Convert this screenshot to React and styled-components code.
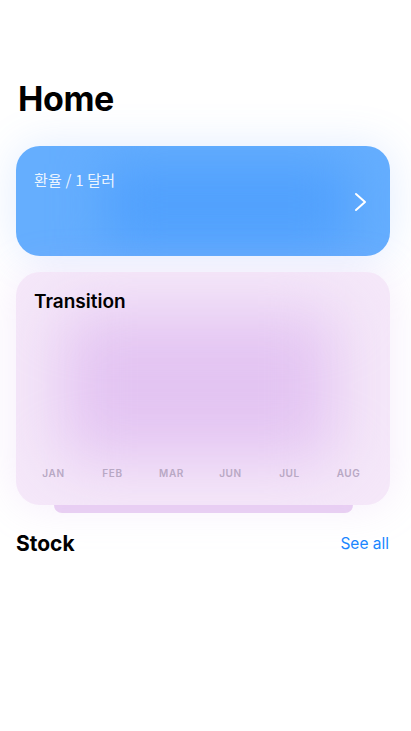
import React from "react";
import styled, { createGlobalStyle } from "styled-components";

const Global = createGlobalStyle`
  html, body { margin: 0; padding: 0; background: #ffffff; }
  body { font-family: Inter, "Noto Sans", "Noto Sans CJK KR", sans-serif; -webkit-font-smoothing: antialiased; }
`;

const Page = styled.div`
  display: flex;
  flex-direction: column;
  padding: 77px 21px 0 16px;
  width: 411px;
  box-sizing: border-box;
`;

const Title = styled.h1`
  margin: 0 0 25px 2px;
  font-size: 34px;
  line-height: 44px;
  font-weight: 700;
  color: #000;
  letter-spacing: -0.4px;
`;

const Card = styled.div`
  position: relative;
  overflow: hidden;
  border-radius: 24px;
  height: ${(p) => p.$h}px;
  background: ${(p) => p.$edge};
  box-shadow: 0 0 44px ${(p) => p.$glow};
  isolation: isolate;
  &::before {
    content: "";
    position: absolute;
    inset: ${(p) => p.$inset};
    background: ${(p) => p.$core};
    filter: blur(${(p) => p.$blur}px);
    z-index: -1;
  }
`;

const RateCard = styled(Card)`
  display: flex;
  align-items: flex-start;
  justify-content: space-between;
  padding: 24px 22px 0 18px;
  box-sizing: border-box;
  margin-bottom: 16px;
`;

const RateLabel = styled.span`
  font-family: "Noto Sans CJK KR", "Noto Sans", sans-serif;
  font-size: 15px;
  line-height: 20px;
  letter-spacing: 0.2px;
  color: rgba(255, 255, 255, 0.9);
`;

const Chevron = styled.svg`
  margin-top: 22px;
  width: 14px;
  height: 20px;
`;

const ChartCard = styled(Card)`
  display: flex;
  flex-direction: column;
  padding: 18px 12px 26px 8px;
  box-sizing: border-box;
`;

const CardTitle = styled.h2`
  margin: 0 0 0 10px;
  font-size: 19px;
  line-height: 24px;
  font-weight: 600;
  color: #000;
`;

const Months = styled.div`
  margin-top: auto;
  display: grid;
  grid-template-columns: repeat(6, 1fr);
`;

const Month = styled.span`
  text-align: center;
  font-size: 10px;
  line-height: 12px;
  font-weight: 600;
  letter-spacing: 0.6px;
  color: #b8a8c4;
`;

const StackEdge = styled.div`
  height: 8px;
  margin: 0 37px 0 38px;
  background: #ebd3f4;
  border-radius: 0 0 8px 8px;
`;

const SectionRow = styled.div`
  display: flex;
  align-items: center;
  justify-content: space-between;
  margin-top: 18px;
`;

const SectionTitle = styled.h3`
  margin: 0;
  font-size: 21px;
  line-height: 26px;
  font-weight: 700;
  color: #000;
`;

const SeeAll = styled.a`
  font-size: 15.5px;
  line-height: 20px;
  color: #1a86ff;
  text-decoration: none;
  margin-right: 1px;
`;

const months = ["JAN", "FEB", "MAR", "JUN", "JUL", "AUG"];

export default function App() {
  return (
    <>
      <Global />
      <Page>
        <Title>Home</Title>
        <RateCard
          $h={110}
          $edge="#65aefe"
          $core="#50a0fd"
          $glow="rgba(90, 150, 255, 0.18)"
          $inset="18px 40px 10px 90px"
          $blur={26}
        >
          <RateLabel>환율 / 1 달러</RateLabel>
          <Chevron viewBox="0 0 14 20" fill="none">
            <path d="M2 2 L11 10 L2 18" stroke="#fff" strokeWidth="2" strokeLinecap="round" strokeLinejoin="round" />
          </Chevron>
        </RateCard>
        <ChartCard
          $h={233}
          $edge="#f5e8f9"
          $core="#e3c4f2"
          $glow="rgba(210, 170, 235, 0.22)"
          $inset="40px 55px 45px 45px"
          $blur={32}
        >
          <CardTitle>Transition</CardTitle>
          <Months>
            {months.map((m) => (
              <Month key={m}>{m}</Month>
            ))}
          </Months>
        </ChartCard>
        <StackEdge />
        <SectionRow>
          <SectionTitle>Stock</SectionTitle>
          <SeeAll href="#">See all</SeeAll>
        </SectionRow>
      </Page>
    </>
  );
}
